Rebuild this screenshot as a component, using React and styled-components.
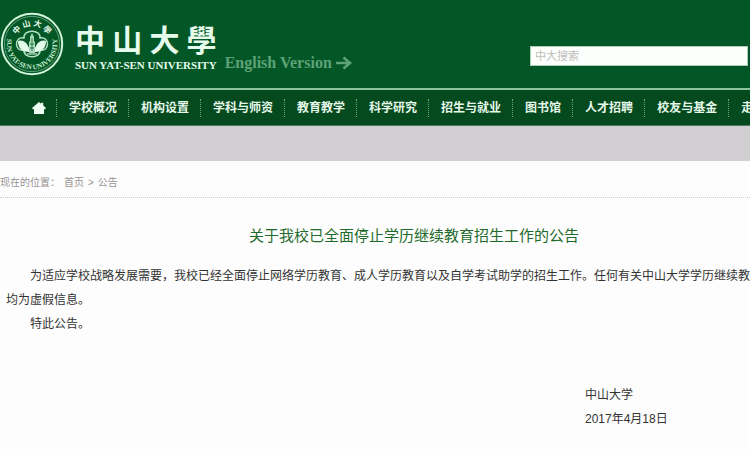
import React from 'react'
import styled, { createGlobalStyle } from 'styled-components';

const GlobalStyle = createGlobalStyle`
  * {
    box-sizing: border-box;
  }

  body {
    margin: 0;
    background-color: #fdfdfd;
    font-family: "Liberation Sans", "Noto Sans CJK SC", sans-serif;
    font-size: 12px;
    overflow-x: hidden;
  }
`;

const menu = [
  '学校概况',
  '机构设置',
  '学科与师资',
  '教育教学',
  '科学研究',
  '招生与就业',
  '图书馆',
  '人才招聘',
  '校友与基金',
  '走进中大',
];

const Seal = () => (
  <SealSvg viewBox="0 0 64 64" aria-hidden="true">
    <defs>
      <path id="sealTop" d="M14 32 A18 18 0 0 1 50 32" />
      <path id="sealBottom" d="M8 24 A25.3 25.3 0 1 0 56 24" />
    </defs>
    <circle cx="32" cy="32" r="30.2" fill="none" stroke="#d3f3dc" strokeWidth="2" />
    <circle cx="32" cy="32" r="27.6" fill="none" stroke="#75b38a" strokeWidth="0.8" />
    <SealHanzi>
      <textPath href="#sealTop" startOffset="50%">中 山 大 學</textPath>
    </SealHanzi>
    <SealLatin>
      <textPath href="#sealBottom" startOffset="50%">SUN YAT-SEN UNIVERSITY</textPath>
    </SealLatin>
    {/* four lobed flower */}
    <path
      d="M24 26 C23 17 41 17 40 26 C50 24 50 40 40 38 C41 47 23 47 24 38 C14 40 14 24 24 26Z"
      fill="#075829"
      stroke="#b5e3c4"
      strokeWidth="1.4"
    />
    <path d="M18 29 C22 27 27 30 29 36 L29 40 C23 40 18 37 18 29Z" fill="#e4faea" />
    <path d="M46 29 C42 27 37 30 35 36 L35 40 C41 40 46 37 46 29Z" fill="#e4faea" />
    <path d="M32 21 L34 25 L34 29 L35 30 L35 41 L29 41 L29 30 L30 29 L30 25Z" fill="#a9dab9" />
    <path d="M32 26 V39 M30 32 H34 M30 36 H34" stroke="#075829" strokeWidth="0.7" />
    <path d="M27 42 H37" stroke="#c9efd4" strokeWidth="1.2" />
  </SealSvg>
)

const App = () => {
  return (
    <>
      <GlobalStyle />
      <Header>
        <Brand href="#home">
          <Seal />
          <Names>
            <ChineseName>
              {['中', '山', '大', '學'].map((char) => (
                <span key={char}>{char}</span>
              ))}
            </ChineseName>
            <LatinName>SUN YAT-SEN UNIVERSITY</LatinName>
          </Names>
        </Brand>
        <English href="#english">
          English Version
          <svg width="16" height="14" viewBox="0 0 16 14" fill="none" stroke="currentColor" strokeWidth="2.6">
            <path d="M0 7 H13 M7.5 1.5 L14 7 L7.5 12.5" />
          </svg>
        </English>
        <Search type="text" placeholder="中大搜索" aria-label="中大搜索" />
      </Header>

      <Nav>
        <HomeLink href="#home" aria-label="首页">
          <svg width="14" height="12" viewBox="0 0 14 12" fill="currentColor">
            <path d="M7 0 L9.2 1.8 V0.8 H11.2 V3.5 L14 6 L13 7.2 H12 V12 H2 V7.2 H1 L0 6Z" />
          </svg>
        </HomeLink>
        {menu.map((item) => (
          <NavLink key={item} href="#menu">{item}</NavLink>
        ))}
      </Nav>
      <Banner />

      <Breadcrumb>
        <span>现在的位置：</span>
        <CrumbLink href="#home">首页</CrumbLink>
        <span>&gt;</span>
        <CrumbLink href="#notice">公告</CrumbLink>
      </Breadcrumb>

      <Article>
        <Title>关于我校已全面停止学历继续教育招生工作的公告</Title>
        <Paragraph>
          为适应学校战略发展需要，我校已经全面停止网络学历教育、成人学历教育以及自学考试助学的招生工作。任何有关中山大学学历继续教育
          <br />
          均为虚假信息。
        </Paragraph>
        <Paragraph>特此公告。</Paragraph>
        <Signature>
          <div>中山大学</div>
          <div>2017年4月18日</div>
        </Signature>
      </Article>
    </>
  )
}

export default App;


const Header = styled.header`
  display: flex;
  height: 88px;
  padding-right: 2px;
  background-color: #035726;
`;

const Brand = styled.a`
  display: flex;
  flex-shrink: 0;
  padding-top: 12px;
  color: #e6fbec;
  text-decoration: none;
`;

const SealSvg = styled.svg`
  width: 64px;
  height: 64px;
`;

const SealHanzi = styled.text`
  fill: #e4faea;
  font-family: "Noto Sans CJK TC", sans-serif;
  font-size: 8px;
  font-weight: 700;
  text-anchor: middle;
`;

const SealLatin = styled.text`
  fill: #c3ebcf;
  font-family: "Liberation Serif", serif;
  font-size: 7px;
  font-weight: 700;
  text-anchor: middle;
`;

const Names = styled.div`
  display: flex;
  flex-direction: column;
  padding: 8px 0 0 11px;
`;

const ChineseName = styled.div`
  display: flex;
  justify-content: space-between;
  font-family: "Noto Sans CJK TC", sans-serif;
  font-size: 30px;
  font-weight: 700;
  line-height: 36px;
`;

const LatinName = styled.div`
  font-family: "Liberation Serif", serif;
  font-size: 11px;
  font-weight: 700;
  line-height: 18px;
`;

const English = styled.a`
  display: flex;
  flex-shrink: 0;
  align-items: center;
  align-self: flex-start;
  gap: 4px;
  margin: 54px auto 0 8px;
  color: #5da277;
  font-family: "Liberation Serif", serif;
  font-size: 16px;
  font-weight: 700;
  line-height: 18px;
  text-decoration: none;
`;

const Search = styled.input`
  flex: 0 1 218px;
  min-width: 80px;
  height: 20px;
  margin-top: 46px;
  padding: 0 4px;
  border: 1px solid #a9cdb5;
  border-radius: 0;
  background-color: #fdfffd;
  font-family: "Liberation Sans", "Noto Sans CJK SC", sans-serif;
  font-size: 11px;

  &::placeholder {
    color: #c0bcbc;
  }
`;

const Nav = styled.nav`
  display: flex;
  align-items: center;
  height: 38px;
  padding-left: 32px;
  border-top: 2px solid #8cc29d;
  border-bottom: 1px solid #4b7c5a;
  background-color: #054a1f;
  overflow: hidden;
`;

const HomeLink = styled.a`
  display: flex;
  flex-shrink: 0;
  width: 24px;
  color: #effff3;
`;

const NavLink = styled.a`
  flex-shrink: 0;
  padding: 0 11px 0 12px;
  border-left: 1px dotted #6fa180;
  color: #e6f8ea;
  font-weight: 700;
  line-height: 18px;
  text-decoration: none;
  white-space: nowrap;
`;

const Banner = styled.div`
  height: 35px;
  background-color: #d1ced1;
`;

const Breadcrumb = styled.div`
  display: flex;
  gap: 4px;
  height: 37px;
  padding-top: 12px;
  border-bottom: 1px dotted #cccccc;
  color: #999494;
  font-size: 10px;
  line-height: 20px;
`;

const CrumbLink = styled.a`
  color: inherit;
  text-decoration: none;
`;

const Article = styled.main`
  padding: 26px 0 18px 6px;
  color: #333333;
  line-height: 24px;
  overflow: hidden;
`;

const Title = styled.h1`
  margin: 0 0 16px;
  padding-left: 72px;
  color: #1f6b2c;
  font-size: 15px;
  font-weight: 400;
  line-height: 24px;
  text-align: center;
`;

const Paragraph = styled.p`
  margin: 0;
  text-indent: 2em;
  white-space: nowrap;
`;

const Signature = styled.div`
  width: 165px;
  margin: 47px 0 0 auto;
`;
